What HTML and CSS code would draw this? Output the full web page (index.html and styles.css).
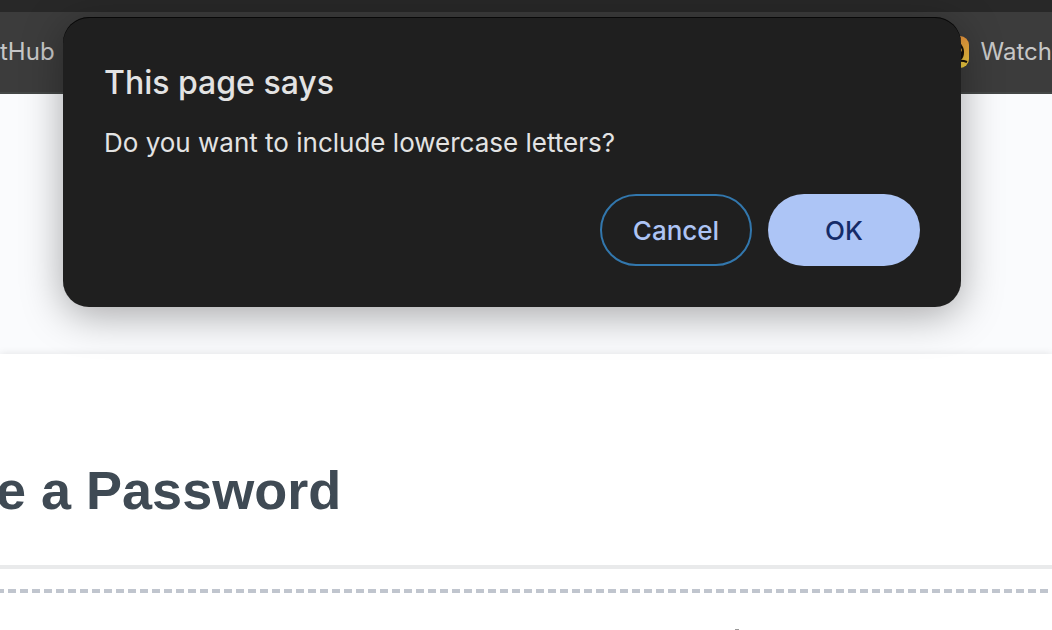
FILE: index.html
```html
<!DOCTYPE html>
<html lang="en">
<head>
<meta charset="utf-8">
<meta name="viewport" content="width=device-width, initial-scale=1">
<title>Generate a Password</title>
<link rel="stylesheet" href="styles.css">
</head>
<body>
<div class="window">
  <nav class="bookmarks">
    <a class="bookmark" href="#">tHub</a>
    <a class="bookmark" href="#">
      <svg class="favicon" viewBox="0 0 32 32" aria-hidden="true">
        <defs>
          <linearGradient id="sun" x1="0" y1="0" x2="0" y2="1">
            <stop offset="0" stop-color="#e8953c"/>
            <stop offset="1" stop-color="#f0d040"/>
          </linearGradient>
        </defs>
        <rect width="32" height="32" rx="9" fill="url(#sun)"/>
        <path d="M16 5c7 0 11 5 11 11 0 4-1 6-3 8H8c-2-2-3-4-3-8C5 10 9 5 16 5z" fill="#151009"/>
        <path d="M2 25h14c6 0 10-1 14 1" fill="none" stroke="#151009" stroke-width="2"/>
        <circle cx="23" cy="14" r="2" fill="#c89a3c"/>
      </svg>
      <span>Watch</span>
    </a>
  </nav>
  <main class="page">
    <section class="card">
      <h1 class="title">e a Password</h1>
      <hr class="rule">
      <div class="result"><span class="mark"></span></div>
    </section>
  </main>
  <div class="dialog" role="alertdialog" aria-labelledby="dialog-title" aria-describedby="dialog-text">
    <h2 class="dialog-title" id="dialog-title">This page says</h2>
    <p class="dialog-text" id="dialog-text">Do you want to include lowercase letters?</p>
    <div class="actions">
      <button class="button button-cancel" type="button">Cancel</button>
      <button class="button button-ok" type="button">OK</button>
    </div>
  </div>
</div>
</body>
</html>
```

FILE: styles.css
```css
* {
  box-sizing: border-box;
}

body {
  margin: 0;
  background: #fff;
  font-family: Inter, "Liberation Sans", sans-serif;
}

.window {
  position: relative;
  min-height: 100vh;
  overflow: hidden;
}

.bookmarks {
  display: flex;
  align-items: center;
  justify-content: space-between;
  height: 94px;
  border-top: 12px solid #282828;
  border-bottom: 2px solid #444746;
  background: #3c3c3c;
}

.bookmark {
  display: flex;
  align-items: center;
  gap: 12px;
  color: #c7c7c7;
  font-family: Inter, sans-serif;
  font-size: 24px;
  line-height: 32px;
  text-decoration: none;
}

.favicon {
  width: 32px;
  height: 32px;
}

.page {
  padding-top: 260px;
  background: #fafbfd;
}

.card {
  padding-top: 102px;
  background: #fff;
  box-shadow: 0 0 8px rgba(0, 0, 0, 0.1);
}

.title {
  margin: 0 0 0 -4px;
  color: #3f4a54;
  font-family: "Liberation Sans", Arial, sans-serif;
  font-size: 54px;
  font-weight: 700;
  line-height: 68px;
}

.rule {
  height: 4px;
  margin: 41px 0 20px;
  border: 0;
  background: #e9eaeb;
}

.result {
  display: flex;
  justify-content: center;
  padding: 40px 0 0 422px;
  background: repeating-linear-gradient(to right, #c0c5ce 0 8px, #fff 8px 12px) -4px 0 / calc(100% + 4px) 4px no-repeat;
}

.mark {
  width: 4px;
  height: 1px;
  background: #999;
}

.dialog {
  position: absolute;
  top: 17px;
  left: 63px;
  right: 91px;
  padding: 46px 41px 41px;
  border-radius: 26px;
  background: #1f1f1f;
  box-shadow: inset 0 1px #080808, 0 8px 40px rgba(0, 0, 0, 0.34);
  color: #e3e3e3;
}

.dialog-title {
  margin: 0;
  font-size: 32px;
  font-weight: 500;
  line-height: 40px;
}

.dialog-text {
  margin: 24px 0 35px;
  font-size: 26px;
  line-height: 32px;
}

.actions {
  display: flex;
  justify-content: flex-end;
  gap: 16px;
}

.button {
  width: 152px;
  height: 72px;
  padding: 2px 0 0;
  border: 0;
  border-radius: 36px;
  font-family: inherit;
  font-size: 26px;
  font-weight: 500;
  line-height: 32px;
}

.button-cancel {
  border: 2px solid #3277ad;
  background: transparent;
  color: #adc4f4;
}

.button-ok {
  background: #adc5f6;
  color: #152b68;
}
```
